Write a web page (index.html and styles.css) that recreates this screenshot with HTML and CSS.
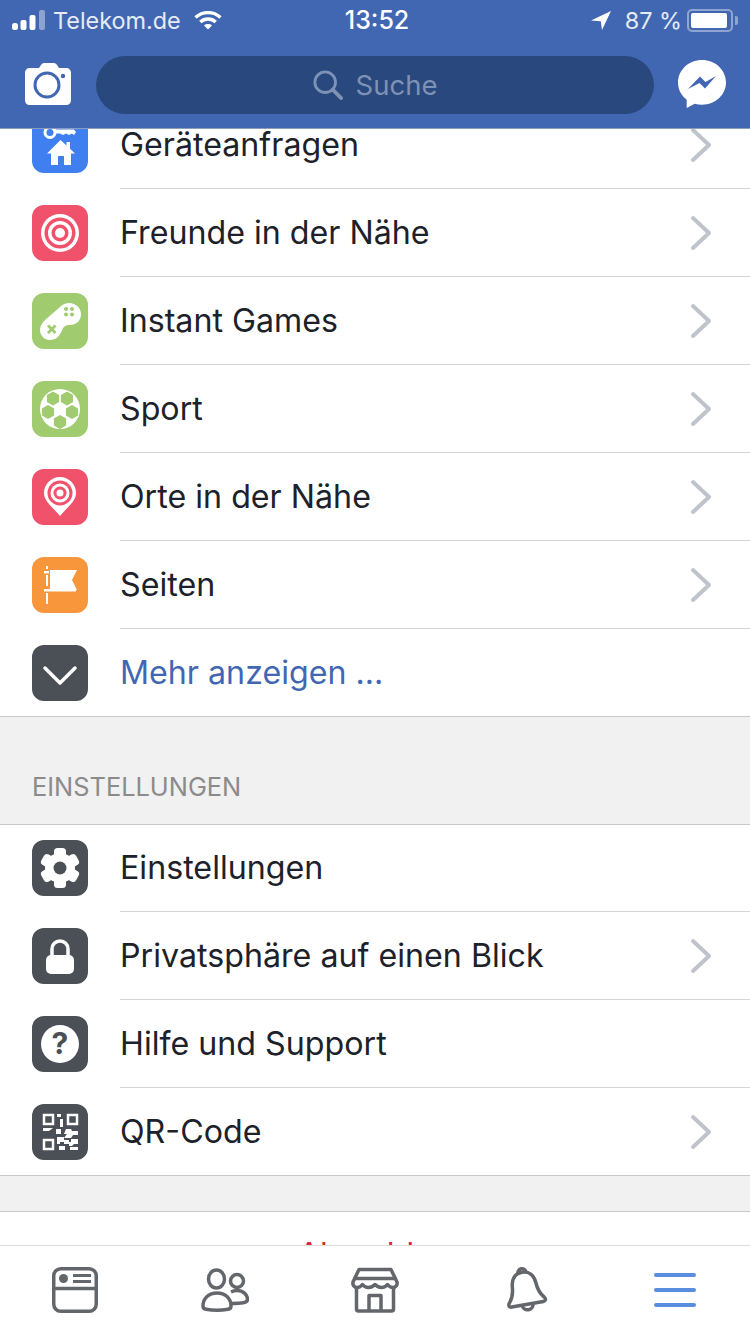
FILE: index.html
```html
<!doctype html>
<html lang="de">
  <head>
    <meta charset="utf-8">
    <meta name="viewport" content="width=device-width, initial-scale=1">
    <title>Facebook - Menü</title>
    <link rel="stylesheet" href="styles.css">
  </head>
  <body>
    <svg class="defs" width="0" height="0">
      <defs>
        <symbol id="chev" viewBox="0 0 24 36"><path d="M5 3l16 15L5 33" fill="none" stroke="#bfc4cc" stroke-width="4" stroke-linecap="round" stroke-linejoin="round"/></symbol>
        <polygon id="hex" points="0,-7 6.100,-3.500 6.100,3.500 0,7 -6.100,3.500 -6.100,-3.500"/>
        <rect id="tooth" x="22" y="8" width="12" height="10" rx="3.500"/>
      </defs>
    </svg>

    <header class="top">
      <div class="status">
        <div class="status-left">
          <svg class="signal" width="34" height="22" viewBox="0 0 34 22" fill="#fff">
            <rect x="0" y="14" width="6" height="7" rx="2.500"/>
            <rect x="8.500" y="11" width="6" height="10" rx="2"/>
            <rect x="17.500" y="6" width="6" height="15" rx="2"/>
            <rect x="27" y="1" width="6" height="20" rx="2" opacity=".4"/>
          </svg>
          <span class="carrier">Telekom.de</span>
          <svg class="wifi" width="28" height="20" viewBox="0 0 28 20" fill="none" stroke="#fff" stroke-width="3.400">
            <path d="M1.500 7.500c7-6.500 18-6.500 25 0"/>
            <path d="M6.300 12c4.400-4 11-4 15.400 0"/>
            <path d="M14 19.500l-4-4c2.300-1.900 5.700-1.900 8 0z" fill="#fff" stroke="none"/>
          </svg>
        </div>
        <div class="clock">13:52</div>
        <div class="status-right">
          <svg class="arrow" width="20" height="20" viewBox="0 0 20 20" fill="#fff"><path d="M0 10.500L20 1l-9 19-1.200-8.800z"/></svg>
          <span class="pct">87 %</span>
          <div class="battery"><div class="battery-fill"></div></div>
          <div class="battery-nub"></div>
        </div>
      </div>
      <div class="nav">
        <svg class="camera" width="46" height="42" viewBox="0 0 46 42">
          <path d="M5 5h9l2-3c.7-1 1.500-2 3-2h10c1.500 0 2.300 1 3 2l2 3h7c3 0 5 2 5 5v27c0 3-2 5-5 5H5c-3 0-5-2-5-5V10c0-3 2-5 5-5z" fill="#fff"/>
          <circle cx="22" cy="22" r="12" fill="none" stroke="#4267b2" stroke-width="3"/>
          <circle cx="38" cy="13" r="2.200" fill="#4267b2"/>
        </svg>
        <div class="search">
          <svg width="30" height="30" viewBox="0 0 32 32" fill="none" stroke="#7e92b6" stroke-width="3">
            <circle cx="13" cy="13" r="11"/>
            <path d="M21 21l9 9" stroke-width="4" stroke-linecap="round"/>
          </svg>
          <span>Suche</span>
        </div>
        <svg class="messenger" width="48" height="48" viewBox="0 0 48 48">
          <path d="M24 0C10.700 0 0 10 0 22.500c0 7 3.300 13 8.700 17.300V48l8-4.300c2.300.6 4.700 1 7.300 1 13.300 0 24-10 24-22.200C48 10 37.300 0 24 0z" fill="#fff"/>
          <path d="M10 29l12-12.500 5.500 5.500L38 16 27 28.500 21.500 23z" fill="#4267b2"/>
        </svg>
      </div>
    </header>

    <main class="content">
      <section class="group scrolled">
        <a class="row">
          <svg class="ico" viewBox="0 0 56 56">
            <rect width="56" height="56" rx="12" fill="#3f7ff0"/>
            <circle cx="18" cy="15.500" r="5" fill="none" stroke="#fff" stroke-width="3"/>
            <path d="M22 12.500h20l2 2.500-2 3-2-1.500-3 1.500-3-1.500-3 1.500-3-1.500h-6z" fill="#fff"/>
            <path d="M28.500 23l6 5.500V25h3.500v6.800l5 4.700h-4V48h-7v-9h-6v9h-7V36.500h-4z" fill="#fff"/>
          </svg>
          <div class="label"><span>Geräteanfragen</span><svg class="chev"><use href="#chev"/></svg></div>
        </a>
        <a class="row">
          <svg class="ico" viewBox="0 0 56 56">
            <rect width="56" height="56" rx="12" fill="#f0526b"/>
            <circle cx="28" cy="28" r="19" fill="#fff"/>
            <circle cx="28" cy="28" r="15.500" fill="#f0526b"/>
            <circle cx="28" cy="28" r="12" fill="#fff"/>
            <circle cx="28" cy="28" r="8.500" fill="#f0526b"/>
            <circle cx="28" cy="28" r="5" fill="#fff"/>
          </svg>
          <div class="label"><span>Freunde in der Nähe</span><svg class="chev"><use href="#chev"/></svg></div>
        </a>
        <a class="row">
          <svg class="ico" viewBox="0 0 56 56">
            <rect width="56" height="56" rx="12" fill="#a0cb6f"/>
            <path d="M37 10c7 0 12 5 12 11 0 7-5 11-11 11-4 0-6 1-8 5-2 6-6 10-12 10S8 42 8 37c0-4 2-7 5-10l15-13c3-3 6-4 9-4z" fill="#fff"/>
            <path d="M16 32.500l7.500 7.500m0-7.500L16 40" stroke="#a0cb6f" stroke-width="2.800"/>
            <g fill="#a0cb6f">
              <circle cx="34" cy="16" r="2"/><circle cx="40" cy="16" r="2"/>
              <circle cx="34" cy="21.500" r="2"/><circle cx="40" cy="21.500" r="2"/>
            </g>
          </svg>
          <div class="label"><span>Instant Games</span><svg class="chev"><use href="#chev"/></svg></div>
        </a>
        <a class="row">
          <svg class="ico" viewBox="0 0 56 56">
            <rect width="56" height="56" rx="12" fill="#a0cb6f"/>
            <circle cx="28" cy="28" r="20" fill="#fff"/>
            <g fill="#a0cb6f">
              <use href="#hex" x="21" y="17.500"/><use href="#hex" x="35" y="17.500"/>
              <use href="#hex" x="40" y="31"/><use href="#hex" x="28" y="41"/>
              <use href="#hex" x="16" y="31"/>
            </g>
          </svg>
          <div class="label"><span>Sport</span><svg class="chev"><use href="#chev"/></svg></div>
        </a>
        <a class="row">
          <svg class="ico" viewBox="0 0 56 56">
            <rect width="56" height="56" rx="12" fill="#f0526b"/>
            <path d="M28 47C22 39 12 33 12 24a16 16 0 0 1 32 0c0 9-10 15-16 23z" fill="#fff"/>
            <circle cx="28" cy="24" r="12.500" fill="#f0526b"/>
            <circle cx="28" cy="24" r="9.500" fill="#fff"/>
            <circle cx="28" cy="24" r="6.500" fill="#f0526b"/>
            <circle cx="28" cy="24" r="3.500" fill="#fff"/>
          </svg>
          <div class="label"><span>Orte in der Nähe</span><svg class="chev"><use href="#chev"/></svg></div>
        </a>
        <a class="row">
          <svg class="ico" viewBox="0 0 56 56">
            <rect width="56" height="56" rx="12" fill="#f7963a"/>
            <path d="M18 13h27l-5 10 5 10H18z" fill="#fff"/>
            <path d="M12 32h32v2.500H12zM12 14h5v2.500h-5z" fill="#fff"/>
            <path d="M15 9v3M15 18v11M15 36v11" stroke="#fff" stroke-width="2"/>
          </svg>
          <div class="label"><span>Seiten</span><svg class="chev"><use href="#chev"/></svg></div>
        </a>
        <a class="row">
          <svg class="ico" viewBox="0 0 56 56">
            <rect width="56" height="56" rx="12" fill="#4b4f56"/>
            <path d="M13 23l15 15 15-15" fill="none" stroke="#fff" stroke-width="3.500" stroke-linecap="round" stroke-linejoin="round"/>
          </svg>
          <div class="label"><span class="more">Mehr anzeigen ...</span></div>
        </a>
      </section>

      <h2 class="section-title"><span>EINSTELLUNGEN</span></h2>

      <section class="group settings">
        <a class="row">
          <svg class="ico" viewBox="0 0 56 56">
            <rect width="56" height="56" rx="12" fill="#4b4f56"/>
            <g fill="#fff">
              <circle cx="28" cy="28" r="15"/>
              <use href="#tooth"/>
              <use href="#tooth" transform="rotate(60 28 28)"/>
              <use href="#tooth" transform="rotate(120 28 28)"/>
              <use href="#tooth" transform="rotate(180 28 28)"/>
              <use href="#tooth" transform="rotate(240 28 28)"/>
              <use href="#tooth" transform="rotate(300 28 28)"/>
            </g>
            <circle cx="28" cy="28" r="6.500" fill="#4b4f56"/>
          </svg>
          <div class="label"><span>Einstellungen</span></div>
        </a>
        <a class="row">
          <svg class="ico" viewBox="0 0 56 56">
            <rect width="56" height="56" rx="12" fill="#4b4f56"/>
            <path d="M20 28v-7a8 8 0 0 1 16 0v7" fill="none" stroke="#fff" stroke-width="3.500"/>
            <rect x="14" y="27" width="28" height="19" rx="5" fill="#fff"/>
          </svg>
          <div class="label"><span>Privatsphäre auf einen Blick</span><svg class="chev"><use href="#chev"/></svg></div>
        </a>
        <a class="row">
          <svg class="ico" viewBox="0 0 56 56">
            <rect width="56" height="56" rx="12" fill="#4b4f56"/>
            <circle cx="28" cy="28" r="19" fill="#fff"/>
            <text class="qmark" x="28" y="38" text-anchor="middle">?</text>
          </svg>
          <div class="label"><span>Hilfe und Support</span></div>
        </a>
        <a class="row">
          <svg class="ico" viewBox="0 0 56 56">
            <rect width="56" height="56" rx="12" fill="#4b4f56"/>
            <g fill="none" stroke="#fff" stroke-width="2.500">
              <rect x="12" y="11" width="9" height="9"/>
              <rect x="36" y="11" width="9" height="9"/>
              <rect x="12" y="36" width="9" height="9"/>
            </g>
            <g fill="#fff">
              <rect x="25" y="10" width="4" height="3"/><rect x="28" y="15" width="3" height="8"/>
              <path d="M11 24h10l-4 3h-6z"/>
              <path d="M24 25h5v5h-5zM34 25h5l1 2h6v4h-5l-2 3h-7l3-4h-3zM25 33h7v3h5v4h-5v-2h-4v2h-3zM39 35h7v5h-4l-2 2h-3v-4h2zM27 42h6v4h-6zM38 43h8v3h-8z"/>
            </g>
          </svg>
          <div class="label"><span>QR-Code</span><svg class="chev"><use href="#chev"/></svg></div>
        </a>
      </section>

      <div class="gap"></div>
      <div class="logout">Abmelden</div>
    </main>

    <nav class="tabs">
      <a class="tab">
        <svg width="48" height="48" viewBox="0 0 48 48" fill="none" stroke="#63676c" stroke-width="3.500">
          <rect x="2.750" y="2.750" width="42.500" height="42.500" rx="7"/>
          <path d="M3 22.500h42"/>
          <circle cx="12.500" cy="12.500" r="4.500" fill="#63676c" stroke="none"/>
          <path d="M22 9.500h18M22 15.500h18" stroke-width="3"/>
        </svg>
      </a>
      <a class="tab">
        <svg width="48" height="48" viewBox="0 0 48 48" fill="none" stroke="#63676c" stroke-width="3.500">
          <ellipse cx="15.500" cy="13" rx="8" ry="9"/>
          <path d="M2 40c0-8 6-13 14-13s14 5 14 13c0 2-1 3-3 3.300-7 1.200-15 1.200-22 0-2-.3-3-1.300-3-3.300z"/>
          <circle cx="36" cy="15" r="6.500"/>
          <path d="M30 26c2-1 4-1.500 6-1.500 6 0 10.500 4 10.500 9 0 3.500-7 4-16 4"/>
        </svg>
      </a>
      <a class="tab">
        <svg width="48" height="48" viewBox="0 0 48 48" fill="none" stroke="#63676c" stroke-width="3.500" stroke-linejoin="round">
          <path d="M8 3.500h32l6 12.500c.8 3-1.500 5.500-4 5.500-2.200 0-4-1-5.500-3-1.500 2-3.300 3-6 3-2.500 0-4.500-1-6.500-3-2 2-4 3-6.500 3-2.700 0-4.500-1-6-3-1.500 2-3.300 3-5.500 3-2.500 0-4.800-2.500-4-5.500z"/>
          <path d="M2.500 12.500h43"/>
          <path d="M5.500 21.500V43a2 2 0 0 0 2 2h33a2 2 0 0 0 2-2V21.500"/>
          <path d="M18 45V29.500h12V45"/>
        </svg>
      </a>
      <a class="tab">
        <svg width="48" height="48" viewBox="0 0 48 48" fill="none" stroke="#63676c" stroke-width="3.500" stroke-linejoin="round">
          <g transform="rotate(-10 24 24)">
            <path d="M24 6c-7.500 0-11.500 5.500-12 13-.4 7-2 11-5.500 15-2 2.500-1 4.500 1.500 4.500h32c2.500 0 3.500-2 1.500-4.500-3.500-4-5.100-8-5.500-15C35.500 11.500 31.500 6 24 6z"/>
            <path d="M18.500 38.500a5.500 5.500 0 0 0 11 0"/>
            <path d="M20 6.500a4 4 0 0 1 8 0"/>
          </g>
        </svg>
      </a>
      <a class="tab">
        <div class="burger"><i></i><i></i><i></i></div>
      </a>
    </nav>
  </body>
</html>
```

FILE: styles.css
```css
html, body
{
	margin: 0;
	padding: 0;
}

body
{
	width: 750px;
	height: 1334px;
	display: flex;
	flex-direction: column;
	overflow: hidden;
	background-color: #fff;
	font-family: Inter, "Liberation Sans", sans-serif;
	color: #1d2129;
}

.defs
{
	position: absolute;
}

/* blue top part */

.top
{
	height: 128px;
	flex: none;
	background-color: #4267b2;
	border-bottom: 1px solid #8c9cbc;
	color: #fff;
	position: relative;
	z-index: 1;
}

.status
{
	height: 40px;
	display: grid;
	grid-template-columns: 1fr auto 1fr;
	align-items: center;
	padding: 0 12px;
	font-size: 23.4px;
}

.status-left, .status-right
{
	display: flex;
	align-items: center;
}

.status-right
{
	justify-content: flex-end;
}

.signal
{
	margin-right: 7px;
}

.wifi
{
	margin-left: 13px;
}

.carrier, .pct
{
	color: #e6ebf5;
}

.clock
{
	margin-left: 4px;
	font-size: 25px;
	font-weight: 500;
}

.arrow
{
	margin-right: 14px;
}

.pct
{
	margin-right: 5px;
}

.battery
{
	width: 46px;
	height: 23px;
	box-sizing: border-box;
	border: 2px solid #8fa5d0;
	border-radius: 5px;
	padding: 2px;
}

.battery-fill
{
	width: 36px;
	height: 100%;
	background-color: #fff;
	border-radius: 2px;
}

.battery-nub
{
	width: 3px;
	height: 9px;
	margin-left: 2px;
	background-color: #8fa5d0;
	border-radius: 0 2px 2px 0;
}

.nav
{
	height: 88px;
	display: flex;
	align-items: flex-start;
	padding-left: 25px;
}

.camera
{
	margin-top: 23px;
}

.search
{
	width: 558px;
	height: 58px;
	margin: 16px 24px 0 25px;
	background-color: #29487d;
	border-radius: 29px;
	display: flex;
	align-items: center;
	justify-content: center;
	gap: 13px;
	font-size: 27.5px;
	color: #7e92b6;
}

.messenger
{
	margin-top: 20px;
}

/* menu list */

.content
{
	flex: 1;
	min-height: 0;
	overflow: hidden;
}

.scrolled
{
	margin-top: -28px;
}

.group
{
	border-bottom: 1px solid #c9c9c9;
	background-color: #fff;
}

.row
{
	height: 88px;
	display: flex;
	padding-left: 32px;
	box-sizing: border-box;
	gap: 32px;
	align-items: stretch;
}

.ico
{
	width: 56px;
	height: 56px;
	flex: none;
	align-self: center;
}

.label
{
	flex: 1;
	display: flex;
	align-items: center;
	justify-content: space-between;
	padding-right: 38px;
	font-size: 32.2px;
	border-bottom: 1px solid #d4d4d4;
}

.row:last-child
{
	height: 87px;
}

.row:last-child .label
{
	border-bottom: 0;
}

.chev
{
	width: 24px;
	height: 36px;
}

.more
{
	color: #4267b2;
}

.qmark
{
	font-family: Inter, sans-serif;
	font-size: 30px;
	font-weight: 700;
	fill: #4b4f56;
}

.section-title
{
	height: 108px;
	margin: 0;
	box-sizing: border-box;
	padding: 0 0 22px 32px;
	display: flex;
	align-items: flex-end;
	background-color: #f1f1f1;
	border-bottom: 1px solid #c9c9c9;
	font-size: 25.4px;
	font-weight: 400;
	line-height: 30px;
	color: #8b8b8b;
}

.settings .row:first-child
{
	height: 87px;
}

.settings .row:first-child .ico
{
	margin-bottom: 1px;
}

.settings .row:first-child .label
{
	padding-bottom: 1px;
}

.gap
{
	height: 35px;
	background-color: #f1f1f1;
	border-bottom: 1px solid #c9c9c9;
}

.logout
{
	padding-top: 23px;
	font-size: 32.2px;
	line-height: 40px;
	text-align: center;
	color: #d9263a;
}

/* bottom tabs */

.tabs
{
	height: 89px;
	flex: none;
	box-sizing: border-box;
	border-top: 1px solid #dcdcdc;
	display: grid;
	grid-template-columns: repeat(5, 150px);
	background-color: #fff;
}

.tab
{
	display: flex;
	align-items: center;
	justify-content: center;
}

.burger
{
	width: 42px;
	display: flex;
	flex-direction: column;
	gap: 11px;
}

.burger i
{
	height: 4px;
	border-radius: 2px;
	background-color: #5b8ddf;
}
```
